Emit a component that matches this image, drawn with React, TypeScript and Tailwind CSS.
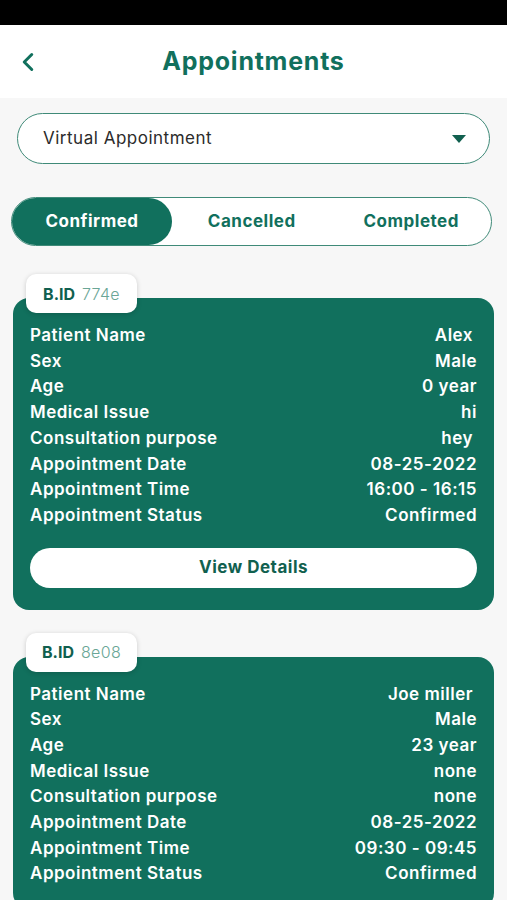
import { ChevronLeft } from "lucide-react";

const GREEN = "#11705d";

interface Appointment {
  bid: string;
  rows: [string, string][];
  showButton?: boolean;
}

const appointments: Appointment[] = [
  {
    bid: "774e",
    showButton: true,
    rows: [
      ["Patient Name", "Alex"],
      ["Sex", "Male"],
      ["Age", "0 year"],
      ["Medical Issue", "hi"],
      ["Consultation purpose", "hey"],
      ["Appointment Date", "08-25-2022"],
      ["Appointment Time", "16:00 - 16:15"],
      ["Appointment Status", "Confirmed"],
    ],
  },
  {
    bid: "8e08",
    rows: [
      ["Patient Name", "Joe miller"],
      ["Sex", "Male"],
      ["Age", "23 year"],
      ["Medical Issue", "none"],
      ["Consultation purpose", "none"],
      ["Appointment Date", "08-25-2022"],
      ["Appointment Time", "09:30 - 09:45"],
      ["Appointment Status", "Confirmed"],
    ],
  },
];

// values that sit a little in from the right edge in the design
const inset = ["Alex", "hey", "Joe miller"];

const AppointmentCard = ({ item }: { item: Appointment }) => (
  <div className="mx-[13px] shrink-0">
    {/* Booking id tab */}
    <div className="relative z-10 ml-[13px] -mb-[15px] flex h-[39px] w-[111px] items-center justify-center gap-[7px] rounded-[10px] bg-white shadow-[0_1px_5px_rgba(0,0,0,0.18)]">
      <span className="text-[16px] font-bold text-[#11604f]">B.ID</span>
      <span className="text-[16px] font-light tracking-[0.02em] text-[#6aa696]">
        {item.bid}
      </span>
    </div>
    <div className="rounded-[16px] bg-[#11705d] px-[17px] pt-[25px] pb-[22px] text-white">
      {item.rows.map(([label, value]) => (
        <div
          key={label}
          className="flex h-[25.7px] items-center justify-between text-[17px] font-semibold tracking-[0.03em]"
        >
          <span>{label}</span>
          <span className={inset.includes(value) ? "mr-[4px]" : ""}>{value}</span>
        </div>
      ))}
      {item.showButton && (
        <button className="mt-[19px] flex h-[40px] w-full items-center justify-center rounded-full bg-white text-[17px] font-bold tracking-[0.03em] text-[#11604f]">
          View Details
        </button>
      )}
    </div>
  </div>
);

export default function App() {
  return (
    <div
      className="h-[900px] w-[507px] overflow-hidden bg-[#f7f7f7]"
      style={{ fontFamily: "Inter, 'Noto Sans', sans-serif" }}
    >
      {/* Status bar */}
      <div className="h-[25px] w-full bg-black" />

      {/* Header */}
      <header className="relative flex h-[73px] items-center justify-center bg-white">
        <ChevronLeft
          className="absolute left-[13px] top-1/2 -translate-y-1/2"
          size={30}
          strokeWidth={2.4}
          color={GREEN}
        />
        <h1 className="text-[25px] font-bold tracking-[0.03em] text-[#11705d]">
          Appointments
        </h1>
      </header>

      {/* Type select */}
      <div className="mx-[17px] mt-[15px] flex h-[51px] items-center justify-between rounded-full border border-[#3f8a78] bg-white pl-[25px] pr-[22px]">
        <span className="text-[17px] tracking-[0.03em] text-[#2b2b2b]">
          Virtual Appointment
        </span>
        <svg width="16" height="10" viewBox="0 0 16 10">
          <path d="M1 1 L15 1 L8 9 Z" fill="#11604f" />
        </svg>
      </div>

      {/* Status tabs */}
      <div className="ml-[11px] mr-[15px] mt-[33px] flex h-[49px] items-center rounded-full border border-[#3f8a78] bg-white">
        <div className="flex h-full w-[160px] items-center justify-center rounded-full bg-[#11705d] text-[17px] font-bold tracking-[0.03em] text-white">
          Confirmed
        </div>
        <div className="flex h-full flex-1 items-center justify-center text-[17px] font-bold tracking-[0.03em] text-[#11705d]">
          Cancelled
        </div>
        <div className="flex h-full flex-1 items-center justify-center text-[17px] font-bold tracking-[0.03em] text-[#11705d]">
          Completed
        </div>
      </div>

      {/* Appointment list */}
      <div className="mt-[28px] flex flex-col gap-[23px]">
        {appointments.map((item) => (
          <AppointmentCard key={item.bid} item={item} />
        ))}
      </div>
    </div>
  );
}
